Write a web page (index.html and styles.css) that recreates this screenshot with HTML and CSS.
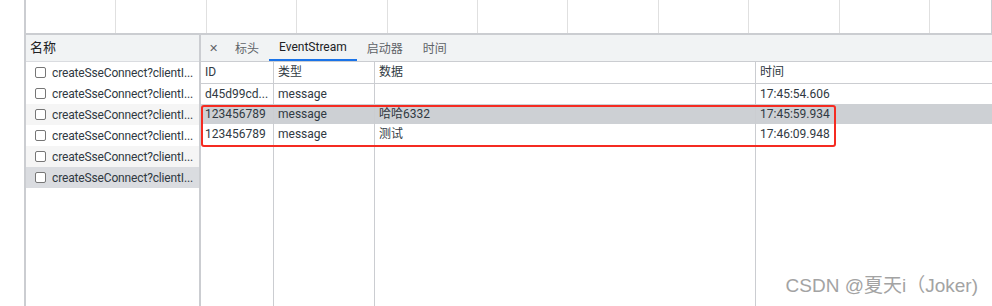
FILE: index.html
```html
<!DOCTYPE html>
<html lang="zh">
<head>
    <meta charset="UTF-8">
    <title>Network - EventStream</title>
    <link rel="stylesheet" href="styles.css">
</head>
<body>
    <div class="devtools">
        <!-- overview strip -->
        <div class="overview">
            <div class="tick"></div><div class="tick"></div><div class="tick"></div>
            <div class="tick"></div><div class="tick"></div><div class="tick"></div>
            <div class="tick"></div><div class="tick"></div><div class="tick"></div>
            <div class="tick"></div><div class="tick last"></div>
        </div>

        <div class="split">
            <!-- request list -->
            <div class="sidebar">
                <div class="side-head">名称</div>
                <div class="req"><span class="check"></span>createSseConnect?clientI...</div>
                <div class="req"><span class="check"></span>createSseConnect?clientI...</div>
                <div class="req striped"><span class="check"></span>createSseConnect?clientI...</div>
                <div class="req"><span class="check"></span>createSseConnect?clientI...</div>
                <div class="req striped"><span class="check"></span>createSseConnect?clientI...</div>
                <div class="req selected"><span class="check"></span>createSseConnect?clientI...</div>
            </div>

            <!-- detail panel -->
            <div class="detail">
                <div class="tabs">
                    <span class="close">✕</span>
                    <span class="tab">标头</span>
                    <span class="tab active">EventStream</span>
                    <span class="tab">启动器</span>
                    <span class="tab">时间</span>
                </div>
                <div class="grid">
                    <div class="col c-id">
                        <div class="cell head">ID</div>
                        <div class="cell">d45d99cd...</div>
                        <div class="cell sel">123456789</div>
                        <div class="cell">123456789</div>
                    </div>
                    <div class="col c-type">
                        <div class="cell head">类型</div>
                        <div class="cell">message</div>
                        <div class="cell sel">message</div>
                        <div class="cell">message</div>
                    </div>
                    <div class="col c-data">
                        <div class="cell head">数据</div>
                        <div class="cell"></div>
                        <div class="cell sel">哈哈6332</div>
                        <div class="cell">测试</div>
                    </div>
                    <div class="col c-time">
                        <div class="cell head">时间</div>
                        <div class="cell">17:45:54.606</div>
                        <div class="cell sel">17:45:59.934</div>
                        <div class="cell">17:46:09.948</div>
                    </div>
                    <div class="mark"></div>
                </div>
            </div>
        </div>
        <div class="watermark">CSDN @夏天i（Joker)</div>
    </div>
</body>
</html>
```

FILE: styles.css
```css
* {
    padding: 0;
    margin: 0;
    box-sizing: border-box;
}

body {
    width: 992px;
    height: 306px;
    overflow: hidden;
    background-color: white;
    font-family: Roboto, "Noto Sans CJK SC", sans-serif;
    font-size: 12px;
    color: #303942;
}

.devtools {
    position: relative;
    margin-left: 24px;
    height: 306px;
    border-left: 2px solid #cbcdd1;
    display: flex;
    flex-direction: column;
}

.overview {
    height: 35px;
    display: flex;
    border-bottom: 2px solid #cbcdd1;
}

.tick {
    flex: 0 0 90.4px;
    border-right: 1px solid #e0e0e0;
}

.tick.last {
    flex: 1;
    border-right: 1px solid #cbcdd1;
}

.split {
    flex: 1;
    display: flex;
}

.sidebar {
    width: 175px;
    border-right: 2px solid #cbcdd1;
}

.side-head {
    height: 27px;
    line-height: 26px;
    padding-left: 4px;
    background-color: #f1f3f4;
    border-bottom: 1px solid #dadce0;
    font-size: 13px;
    color: #202124;
}

.req {
    height: 21px;
    display: flex;
    align-items: center;
    padding-left: 9px;
    white-space: nowrap;
    letter-spacing: -0.15px;
}

.req.striped {
    background-color: #f5f5f5;
}

.req.selected {
    background-color: #dadce0;
}

.check {
    width: 11px;
    height: 11px;
    border: 1px solid #767676;
    border-radius: 2px;
    background: white;
    margin-right: 6px;
    flex: none;
}

.detail {
    flex: 1;
    display: flex;
    flex-direction: column;
}

.tabs {
    height: 27px;
    display: flex;
    align-items: stretch;
    background-color: #f1f3f4;
    border-bottom: 1px solid #cbcdd1;
    padding-left: 8px;
}

.close {
    display: flex;
    align-items: center;
    width: 16px;
    color: #5f6368;
    font-size: 11px;
}

.tab {
    display: flex;
    align-items: center;
    padding: 0 10px;
    color: #5f6368;
    border-bottom: 2px solid transparent;
}

.tab.active {
    color: #202124;
    border-bottom-color: #1a73e8;
}

.grid {
    position: relative;
    flex: 1;
    display: flex;
}

.col {
    border-right: 1px solid #cbcdd1;
}

.c-id { width: 73px; }
.c-type { width: 101px; }
.c-data { width: 381px; }
.c-time { flex: 1; border-right: none; }

.cell {
    height: 20px;
    line-height: 20px;
    padding-left: 4px;
    white-space: nowrap;
    overflow: hidden;
}

.cell.head {
    height: 22px;
    line-height: 21px;
    border-bottom: 1px solid #cbcdd1;
}

.cell.sel {
    background-color: #cdd0d4;
}

.mark {
    position: absolute;
    left: 0;
    top: 43px;
    width: 635px;
    height: 42px;
    border: 2.5px solid #f52b21;
    border-radius: 3px;
}

.watermark {
    position: absolute;
    right: 14px;
    bottom: 9px;
    font-family: "Liberation Sans", "Noto Sans CJK SC", sans-serif;
    font-size: 19px;
    color: #a3a3a3;
}
```
